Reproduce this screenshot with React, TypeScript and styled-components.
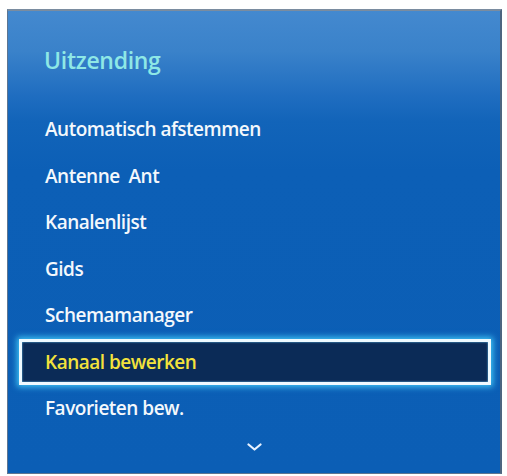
import styled, { createGlobalStyle } from "styled-components";

const GlobalStyle = createGlobalStyle`
  html, body {
    margin: 0;
    padding: 0;
    background: #ffffff;
  }
  body {
    font-family: "Open Sans", "Liberation Sans", sans-serif;
  }
`;

const items = [
  "Automatisch afstemmen",
  "Antenne  Ant",
  "Kanalenlijst",
  "Gids",
  "Schemamanager",
  "Kanaal bewerken",
  "Favorieten bew.",
];

const selectedIndex = 5;

export default function App() {
  return (
    <>
      <GlobalStyle />
      <Page>
        <Panel>
          <Title>Uitzending</Title>
          <List>
            {items.map((label, i) => (
              <Row key={label} $selected={i === selectedIndex}>
                {label}
              </Row>
            ))}
          </List>
          <More>
            <svg width="15" height="8" viewBox="0 0 15 8" fill="none">
              <path
                d="M1.5 1.5 L7.5 6.5 L13.5 1.5"
                stroke="#e8f2ff"
                strokeWidth="2.2"
                strokeLinecap="round"
                strokeLinejoin="round"
              />
            </svg>
          </More>
        </Panel>
      </Page>
    </>
  );
}

const Page = styled.div`
    width: 507px;
    height: 476px;
    padding: 9px 5px 0 7px;
    box-sizing: border-box;
`;

const Panel = styled.section`
    width: 495px;
    height: 465px;
    box-sizing: border-box;
    border: 1px solid #5e7590;
    border-top: 2px solid #7a8ca0;
    border-right: 2px solid #4d6580;
    background: linear-gradient(
        to bottom,
        #4489cf 0px,
        #3a82ca 40px,
        #1f6dc0 85px,
        #1264b9 110px,
        #0c5fb6 160px,
        #0b5eb5 100%
    );
    display: flex;
    flex-direction: column;
    padding-top: 34px;
`;

const Title = styled.h1`
    margin: 0 0 31px 36px;
    font-size: 23px;
    line-height: 30px;
    font-weight: 600;
    letter-spacing: -0.3px;
    color: #8ee8e6;
`;

const List = styled.ul`
    list-style: none;
    margin: 0;
    padding: 0;
`;

const Row = styled.li<{ $selected?: boolean }>`
    height: 46.5px;
    box-sizing: border-box;
    margin: 0 9px 0 11px;
    padding-left: 23px;
    display: flex;
    align-items: center;
    font-size: 19px;
    font-weight: 600;
    letter-spacing: -0.5px;
    white-space: pre;
    color: ${p => (p.$selected ? "#f3e23c" : "#f4f8fc")};
    border: 3px solid ${p => (p.$selected ? "#eefaff" : "transparent")};
    background: ${p => (p.$selected ? "#0b2b57" : "transparent")};
    box-shadow: ${p =>
        p.$selected ? "0 0 6px 2px #3fc4f5, inset 0 0 2px #6fd3ff" : "none"};
`;

const More = styled.div`
    flex: 1;
    display: flex;
    align-items: center;
    justify-content: center;
    padding-bottom: 10px;
`;
